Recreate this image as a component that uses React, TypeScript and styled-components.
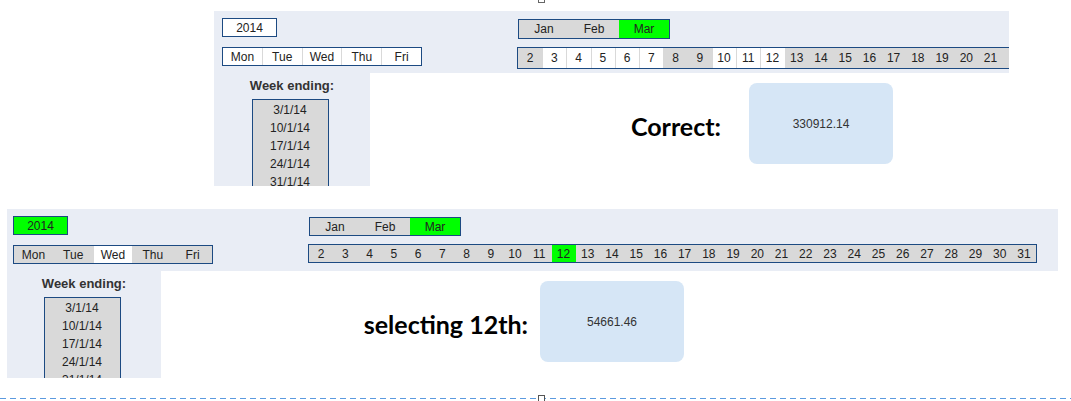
import React from "react";
import styled, { createGlobalStyle } from "styled-components";

const GlobalStyle = createGlobalStyle`
  html, body {
    margin: 0;
    padding: 0;
    background: #ffffff;
  }
  body {
    font-family: "Liberation Sans", Arial, sans-serif;
  }
`;

const BORDER = "#1c4a82";
const GREY = "#d9d9d9";
const GREEN = "#00ff00";
const PANEL = "#e9edf5";

type CellState = "on" | "off" | "pick";

const months = ["Jan", "Feb", "Mar"];
const weekdays = ["Mon", "Tue", "Wed", "Thu", "Fri"];
const weeks = ["3/1/14", "10/1/14", "17/1/14", "24/1/14", "31/1/14"];
const days = Array.from({ length: 30 }, (_, i) => i + 2);

const fill = (s: CellState) =>
  s === "pick" ? GREEN : s === "on" ? "#ffffff" : GREY;

interface SheetBlockProps {
  left: number;
  barWidth: number;
  pad: number;
  daysHeight: number;
  monthsHeight: number;
  lastVisibleDay: number;
  yearState: CellState;
  dayState: (d: number) => CellState;
  weekdayState: (i: number) => CellState;
  weekWidth: number;
  weekHeight: number;
  labelWidth: number;
  labelGap: number;
  label: string;
  value: string;
}

const SheetBlock: React.FC<SheetBlockProps> = (p) => (
  <Block $left={p.left}>
    <Bar $width={p.barWidth} $pad={p.pad}>
      <LeftGroup>
        <YearBox $bg={fill(p.yearState)}>2014</YearBox>
        <Strip $height={19}>
          {weekdays.map((w, i) => (
            <WeekdayCell key={w} $bg={fill(p.weekdayState(i))}>
              {w}
            </WeekdayCell>
          ))}
        </Strip>
      </LeftGroup>
      <RightGroup>
        <Strip $height={p.monthsHeight} $width={152} $top={1}>
          {months.map((m) => (
            <MonthCell key={m} $bg={m === "Mar" ? GREEN : GREY}>
              {m}
            </MonthCell>
          ))}
        </Strip>
        <DayStrip $height={p.daysHeight}>
          {days.map((d) => (
            <DayCell key={d} $bg={fill(p.dayState(d))}>
              {d <= p.lastVisibleDay ? d : ""}
            </DayCell>
          ))}
        </DayStrip>
      </RightGroup>
    </Bar>
    <LowerRow>
      <WeekPanel $width={p.weekWidth} $height={p.weekHeight}>
        <WeekTitle>Week ending:</WeekTitle>
        <WeekList>
          {weeks.map((w) => (
            <WeekItem key={w}>{w}</WeekItem>
          ))}
        </WeekList>
      </WeekPanel>
      <Result>
        <Label $width={p.labelWidth}>{p.label}</Label>
        <ValueBox $gap={p.labelGap}>{p.value}</ValueBox>
      </Result>
    </LowerRow>
  </Block>
);

const topDays = (d: number): CellState =>
  (d >= 3 && d <= 7) || (d >= 10 && d <= 12) ? "on" : "off";

const App: React.FC = () => (
  <>
    <GlobalStyle />
    <Page>
      <TopHandle />
      <SheetBlock
        left={214}
        barWidth={795}
        pad={8}
        daysHeight={22}
        monthsHeight={20}
        lastVisibleDay={21}
        yearState="on"
        dayState={topDays}
        weekdayState={() => "on"}
        weekWidth={156}
        weekHeight={113}
        labelWidth={351}
        labelGap={28}
        label="Correct:"
        value="330912.14"
      />
      <Spacer />
      <SheetBlock
        left={7}
        barWidth={1051}
        pad={6}
        daysHeight={19}
        monthsHeight={19}
        lastVisibleDay={31}
        yearState="pick"
        dayState={(d) => (d === 12 ? "pick" : "off")}
        weekdayState={(i) => (i === 2 ? "on" : "off")}
        weekWidth={154}
        weekHeight={107}
        labelWidth={367}
        labelGap={12}
        label="selecting 12th:"
        value="54661.46"
      />
      <PageBreak>
        <BreakHandle />
      </PageBreak>
    </Page>
  </>
);

export default App;

const Page = styled.div`
  position: relative;
  width: 1071px;
  height: 401px;
  padding-top: 11px;
  box-sizing: border-box;
  overflow: hidden;
`;

const TopHandle = styled.div`
  position: absolute;
  left: 538px;
  top: -4px;
  width: 5px;
  height: 5px;
  border: 1px solid #666;
  background: #fff;
`;

const Block = styled.div<{ $left: number }>`
  margin-left: ${(p) => p.$left}px;
`;

const Bar = styled.div<{ $width: number; $pad: number }>`
  width: ${(p) => p.$width}px;
  height: 62px;
  box-sizing: border-box;
  background: ${PANEL};
  padding: 7px 0 0 ${(p) => p.$pad}px;
  display: flex;
  gap: 95px;
  overflow: hidden;
`;

const LeftGroup = styled.div`
  display: flex;
  flex-direction: column;
  gap: 10px;
  width: 200px;
  flex-shrink: 0;
`;

const RightGroup = styled.div`
  display: flex;
  flex-direction: column;
  gap: 8px;
  flex-shrink: 0;
`;

const YearBox = styled.div<{ $bg: string }>`
  width: 55px;
  height: 19px;
  box-sizing: border-box;
  border: 1px solid ${BORDER};
  background: ${(p) => p.$bg};
  font-size: 12px;
  color: #222;
  display: flex;
  align-items: center;
  justify-content: center;
`;

const Strip = styled.div<{ $height: number; $width?: number; $top?: number }>`
  display: flex;
  width: ${(p) => (p.$width ? `${p.$width}px` : "200px")};
  height: ${(p) => p.$height}px;
  margin-top: ${(p) => p.$top || 0}px;
  margin-left: ${(p) => (p.$top ? 1 : 0)}px;
  box-sizing: border-box;
  border: 1px solid ${BORDER};
`;

const WeekdayCell = styled.div<{ $bg: string }>`
  flex: 1;
  background: ${(p) => p.$bg};
  border-left: 1px solid ${GREY};
  font-size: 12px;
  color: #222;
  display: flex;
  align-items: center;
  justify-content: center;
  &:first-child {
    border-left: none;
  }
`;

const MonthCell = styled.div<{ $bg: string }>`
  flex: 1;
  background: ${(p) => p.$bg};
  font-size: 12px;
  color: #222;
  display: flex;
  align-items: center;
  justify-content: center;
`;

const DayStrip = styled.div<{ $height: number }>`
  display: grid;
  grid-template-columns: repeat(30, 1fr);
  width: 729px;
  height: ${(p) => p.$height}px;
  box-sizing: border-box;
  border: 1px solid ${BORDER};
`;

const DayCell = styled.div<{ $bg: string }>`
  background: ${(p) => p.$bg};
  box-shadow: inset 1px 0 0 ${GREY};
  font-size: 12px;
  color: #222;
  display: flex;
  align-items: center;
  justify-content: center;
`;

const LowerRow = styled.div`
  display: flex;
  align-items: flex-start;
`;

const WeekPanel = styled.div<{ $width: number; $height: number }>`
  width: ${(p) => p.$width}px;
  height: ${(p) => p.$height}px;
  background: ${PANEL};
  overflow: hidden;
  display: flex;
  flex-direction: column;
  align-items: center;
  padding-top: 4px;
  box-sizing: border-box;
`;

const WeekTitle = styled.div`
  font-size: 13px;
  font-weight: 700;
  color: #333;
  height: 18px;
  line-height: 18px;
  margin-bottom: 4px;
`;

const WeekList = styled.div`
  width: 77px;
  margin-left: -4px;
  box-sizing: border-box;
  border: 1px solid ${BORDER};
  background: ${GREY};
  padding-top: 1px;
  display: flex;
  flex-direction: column;
  align-items: center;
`;

const WeekItem = styled.div`
  height: 18px;
  line-height: 18px;
  font-size: 12px;
  color: #222;
`;

const Result = styled.div`
  display: flex;
  align-items: center;
  margin-top: 10px;
`;

const Label = styled.div<{ $width: number }>`
  width: ${(p) => p.$width}px;
  text-align: right;
  font-family: Lato, "Open Sans", sans-serif;
  font-weight: 700;
  font-size: 25px;
  color: #000;
  padding-top: 4px;
`;

const ValueBox = styled.div<{ $gap: number }>`
  margin-left: ${(p) => p.$gap}px;
  width: 144px;
  height: 81px;
  border-radius: 8px;
  background: #d6e6f6;
  font-size: 12px;
  color: #333;
  display: flex;
  align-items: center;
  justify-content: center;
`;

const Spacer = styled.div`
  height: 23px;
`;

const PageBreak = styled.div`
  position: relative;
  margin-top: 20px;
  height: 1px;
  background: repeating-linear-gradient(
    to right,
    #5b9ae0 0 6px,
    transparent 6px 10px
  );
`;

const BreakHandle = styled.div`
  position: absolute;
  left: 538px;
  top: -3px;
  width: 5px;
  height: 5px;
  border: 1px solid #555;
  background: #fff;
`;
